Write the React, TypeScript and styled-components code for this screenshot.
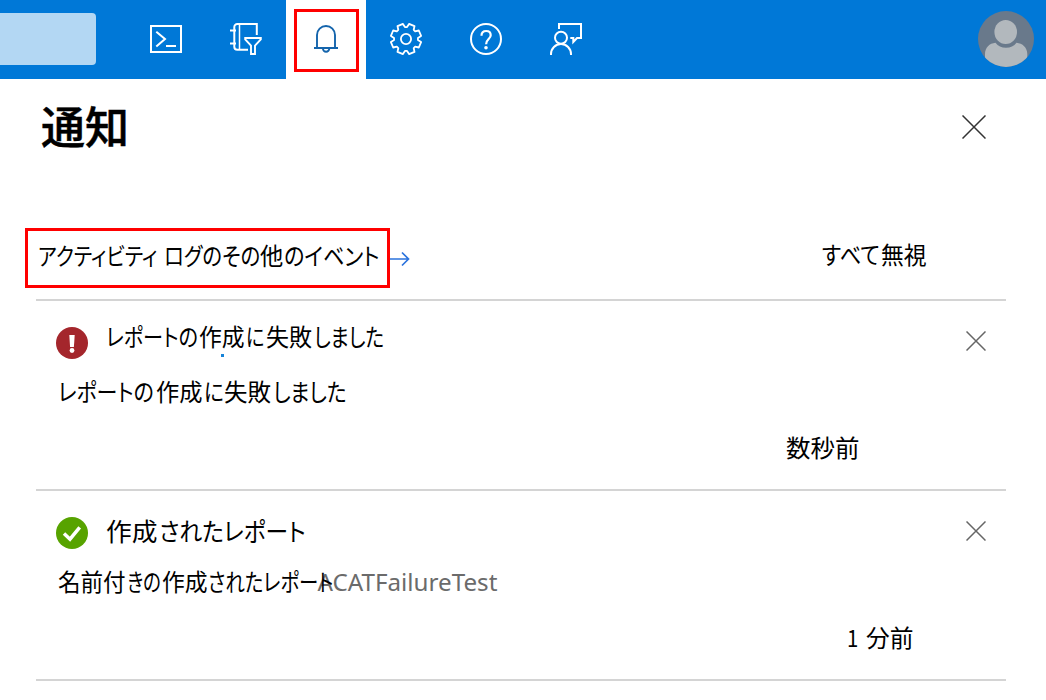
import React from 'react';
import styled, { createGlobalStyle } from 'styled-components';

const GlobalStyle = createGlobalStyle`
  * { box-sizing: border-box; }
  body {
    margin: 0;
    background: #fff;
    color: #000;
    font-family: "Noto Sans CJK JP", sans-serif;
    font-size: 24px;
    font-feature-settings: "palt";
  }
  button { border: 0; padding: 0; background: none; font: inherit; color: inherit; }
  svg { display: block; flex: none; }
`;

const Page = styled.div`
  width: 1046px;
  height: 700px;
  overflow: hidden;
`;

/* ---------- top bar ---------- */

const TopBar = styled.header`
  display: flex;
  align-items: center;
  height: 79px;
  padding-right: 12px;
  background: #0078d7;
`;

const SearchBox = styled.div`
  width: 96px;
  height: 52px;
  margin: 0 30px 1px 0;
  border-radius: 0 4px 4px 0;
  background: #b3d7f3;
`;

const Tool = styled.button<{ $active?: boolean }>`
  display: flex;
  align-items: center;
  justify-content: center;
  width: 80px;
  height: 79px;
  padding-bottom: 1px;
  background: ${p => (p.$active ? '#fff' : 'transparent')};
  color: ${p => (p.$active ? '#1464ac' : '#fff')};
`;

const BellFrame = styled.span`
  display: flex;
  align-items: center;
  justify-content: center;
  width: 65px;
  height: 63px;
  margin: 3px 0 0 1px;
  padding-bottom: 3px;
  padding-right: 1px;
  border: 3px solid #f00;
`;

const Avatar = styled.div`
  width: 56px;
  height: 56px;
  margin: 0 0 1px auto;
  border-radius: 50%;
  overflow: hidden;
  background: #69798b;
`;

/* ---------- panel ---------- */

const Panel = styled.main`
  padding: 0 40px 0 36px;
`;

const PanelHead = styled.div`
  display: flex;
  justify-content: space-between;
  height: 149px;
  padding: 16px 20px 0 5px;
`;

const Title = styled.h1`
  margin: 0;
  font-size: 44px;
  font-weight: 500;
  -webkit-text-stroke: 0.5px #000;
  line-height: 60px;
  white-space: nowrap;
`;

const CloseButton = styled.button<{ $top: number }>`
  align-self: flex-start;
  margin-top: ${p => p.$top}px;
`;

const Actions = styled.div`
  display: flex;
  height: 71px;
  margin-left: -11px;
  width: 981px;
`;

const LinkFrame = styled.a`
  display: block;
  width: 365px;
  height: 60px;
  padding-left: 10px;
  border: 3px solid #f00;
  line-height: 48px;
  white-space: nowrap;
`;

const DismissAll = styled.button`
  display: block;
  height: 48px;
  margin: 2px 79px 0 auto;
  line-height: 48px;
  white-space: nowrap;
`;

const Divider = styled.hr`
  height: 2px;
  margin: 0;
  border: 0;
  background: #d4d4d4;
`;

const Notice = styled.section`
  display: grid;
  grid-template-rows: 67px 47px 74px;
  height: 188px;
`;

const NoticeHead = styled.div`
  display: flex;
  padding: 0 20px 0 20px;
`;

const StatusIcon = styled.span`
  margin: 26px 18px 0 0;
`;

const NoticeTitle = styled.div<{ $size: number; $top: number }>`
  flex: 1;
  position: relative;
  margin-top: ${p => p.$top}px;
  font-size: ${p => p.$size}px;
  line-height: 36px;
  white-space: nowrap;
`;

const Speck = styled.i`
  position: absolute;
  left: 114.500px;
  top: 36px;
  width: 3px;
  height: 3px;
  background: #1683d8;
`;

const NoticeBody = styled.div`
  position: relative;
  padding-left: 22px;
  line-height: 46px;
  white-space: nowrap;
`;

const ResourceName = styled.span`
  position: absolute;
  left: 281.5px;
  top: 1px;
  font-family: "Noto Sans", sans-serif;
  font-size: 24.2px;
  color: #6b6b6b;
`;

const Time = styled.div<{ $right: number }>`
  padding-right: ${p => p.$right}px;
  text-align: right;
  line-height: 64px;
  white-space: nowrap;
`;

/* A run of characters set condensed: $w is its advance, $s its horizontal scale. */
const Run = styled.span<{ $w: number; $s: number }>`
  display: inline-block;
  width: ${p => p.$w}px;
  transform: scaleX(${p => p.$s});
  transform-origin: 0 50%;
  text-align: left;
  white-space: pre;
`;

/* ---------- drawings ---------- */

const stroke = { fill: 'none', stroke: 'currentColor', strokeWidth: 2 } as const;

const Terminal = () => (
  <svg width="32" height="32" viewBox="0 0 32 32" {...stroke}>
    <path d="M1 3h30v26H1z" />
    <path d="M6.3 8.7 15 16l-8.700 7.500M16 23h10" />
  </svg>
);

const NotebookFilter = () => (
  <svg width="32" height="32" viewBox="0 0 32 32" {...stroke}>
    <path d="M26.800 12V1H7.300a3 3 0 0 0-3 3v19.700a3 3 0 0 0 3 3H18" />
    <path d="M9.500 1v26" strokeWidth="1.500" />
    <path d="M0 7.500h6M0 20.500h6" />
    <path d="M15.200 15h15.600v1.300L25 22.700V31h-4v-8.300l-5.800-6.400z" strokeWidth="1.900" />
  </svg>
);

const Bell = () => (
  <svg width="32" height="32" viewBox="0 0 32 32" {...stroke} strokeWidth="1.900">
    <path d="M7 25V12a9 9 0 0 1 18 0v13" />
    <path d="M4 25h24" strokeWidth="2" />
    <path d="M12.900 25.500a3.200 3.200 0 0 0 6.400 0" />
  </svg>
);

const gearPoints = Array.from({ length: 8 }, (_, i) => i * 45)
  .flatMap(a => [[a - 5, 12], [a + 5, 12], [a + 11.5, 15.400], [a + 33.5, 15.400]])
  .map(([deg, r]) => {
    const t = (deg * Math.PI) / 180;
    return `${(16 + r * Math.sin(t)).toFixed(2)},${(16 - r * Math.cos(t)).toFixed(2)}`;
  })
  .join(' ');

const Gear = () => (
  <svg width="32" height="32" viewBox="0 0 32 32" {...stroke} strokeWidth="1.800" strokeLinejoin="round">
    <polygon points={gearPoints} />
    <circle cx="16" cy="16" r="5.100" />
  </svg>
);

const Help = () => (
  <svg width="32" height="32" viewBox="0 0 32 32" {...stroke}>
    <circle cx="16" cy="16" r="15" />
    <path d="M11.500 12.800C11.500 9.800 13.300 8 16.200 8c2.800 0 4.500 1.700 4.500 4.200 0 3.700-4.600 4.200-4.600 9" strokeWidth="2.200" />
    <circle cx="16" cy="24.700" r="1.800" fill="currentColor" stroke="none" />
  </svg>
);

const Feedback = () => (
  <svg width="32" height="32" viewBox="0 0 32 32" {...stroke}>
    <path d="M9 6V1h22v14h-4l-3.700 4V15h-3" />
    <circle cx="11" cy="14.700" r="6" />
    <path d="M1 32v-1a10 10 0 0 1 20 0v1" />
  </svg>
);

const Person = () => (
  <svg width="56" height="56" viewBox="0 0 56 56" fill="#b2b8bd">
    <ellipse cx="27.700" cy="21" rx="11.300" ry="12" />
    <path d="M7 56V43c0-6.500 4.500-10.700 10.500-11.300C20 35 23.500 36.700 28 36.700s8-1.700 10.500-5C44.500 32.300 49.300 36.500 49.300 43v13z" />
  </svg>
);

const Cross = ({ size, color }: { size: number; color: string }) => (
  <svg width={size} height={size} viewBox={`0 0 ${size} ${size}`} stroke={color} strokeWidth="1.500">
    <path d={`M.5.5 ${size - 0.5} ${size - 0.5}M${size - 0.5}.5.5 ${size - 0.5}`} />
  </svg>
);

const Arrow = styled.svg`
  margin-top: 23px;
`;

const ErrorMark = () => (
  <svg width="32" height="32" viewBox="0 0 32 32">
    <circle cx="16" cy="16" r="16" fill="#a4262c" />
    <path d="M13.300 8h5.400l-.8 12h-3.800z" fill="#fff" />
    <circle cx="16" cy="23.500" r="2.400" fill="#fff" />
  </svg>
);

const SuccessMark = () => (
  <svg width="32" height="32" viewBox="0 0 32 32">
    <circle cx="16" cy="16" r="16" fill="#57a300" />
    <path d="M8 16.500l6 5.700 9.700-11.900" fill="none" stroke="#fff" strokeWidth="3.500" />
  </svg>
);

export default function App() {
  return (
    <Page>
      <GlobalStyle />
      <TopBar>
        <SearchBox />
        <Tool><Terminal /></Tool>
        <Tool><NotebookFilter /></Tool>
        <Tool $active><BellFrame><Bell /></BellFrame></Tool>
        <Tool><Gear /></Tool>
        <Tool><Help /></Tool>
        <Tool><Feedback /></Tool>
        <Avatar><Person /></Avatar>
      </TopBar>

      <Panel>
        <PanelHead>
          <Title><Run $w={88} $s={1}>通知</Run></Title>
          <CloseButton $top={20} aria-label="閉じる"><Cross size={24} color="#333" /></CloseButton>
        </PanelHead>

        <Actions>
          <LinkFrame>
            <Run $w={125.5} $s={0.838}>アクティビティ </Run>
            <Run $w={96.5} $s={0.85}>ログのその</Run>
            <Run $w={23.8} $s={0.97}>他</Run>
            <Run $w={94} $s={0.88}>のイベント</Run>
          </LinkFrame>
          <Arrow width="20" height="16" viewBox="0 0 20 16" fill="none" stroke="#2b73dd" strokeWidth="1.700">
            <path d="M0 8h18.500M12 1.500 18.500 8 12 14.500" />
          </Arrow>
          <DismissAll>
            <Run $w={58.5} $s={0.88}>すべて</Run>
            <Run $w={46.5} $s={0.95}>無視</Run>
          </DismissAll>
        </Actions>
        <Divider />

        <Notice>
          <NoticeHead>
            <StatusIcon><ErrorMark /></StatusIcon>
            <NoticeTitle $size={24} $top={17}>
              <Run $w={93} $s={0.84}>レポートの</Run>
              <Run $w={47} $s={0.95}>作成</Run>
              <Run $w={19.5} $s={0.8}>に</Run>
              <Run $w={48} $s={0.96}>失敗</Run>
              <Run $w={70} $s={0.82}>しました</Run>
              <Speck />
            </NoticeTitle>
            <CloseButton $top={30} aria-label="閉じる"><Cross size={20} color="#666" /></CloseButton>
          </NoticeHead>
          <NoticeBody>
            <Run $w={97.5} $s={0.875}>レポートの</Run>
            <Run $w={48} $s={0.97}>作成</Run>
            <Run $w={20} $s={0.86}>に</Run>
            <Run $w={49.5} $s={0.98}>失敗</Run>
            <Run $w={73} $s={0.86}>しました</Run>
          </NoticeBody>
          <Time $right={146}><Run $w={74} $s={1.02}>数秒前</Run></Time>
        </Notice>
        <Divider />

        <Notice>
          <NoticeHead>
            <StatusIcon><SuccessMark /></StatusIcon>
            <NoticeTitle $size={25} $top={21}>
              <Run $w={53} $s={1.03}>作成</Run>
              <Run $w={146} $s={0.91}>されたレポート</Run>
            </NoticeTitle>
            <CloseButton $top={30} aria-label="閉じる"><Cross size={20} color="#666" /></CloseButton>
          </NoticeHead>
          <NoticeBody>
            <ResourceName>ACATFailureTest</ResourceName>
            <Run $w={68.5} $s={0.94}>名前付</Run>
            <Run $w={35} $s={0.77}>きの</Run>
            <Run $w={46} $s={0.95}>作成</Run>
            <Run $w={124} $s={0.81}>されたレポート</Run>
          </NoticeBody>
          <Time $right={92.5}>
            <Run $w={19} $s={0.85}>1 </Run>
            <Run $w={48} $s={0.99}>分前</Run>
          </Time>
        </Notice>
        <Divider />
      </Panel>
    </Page>
  );
}
